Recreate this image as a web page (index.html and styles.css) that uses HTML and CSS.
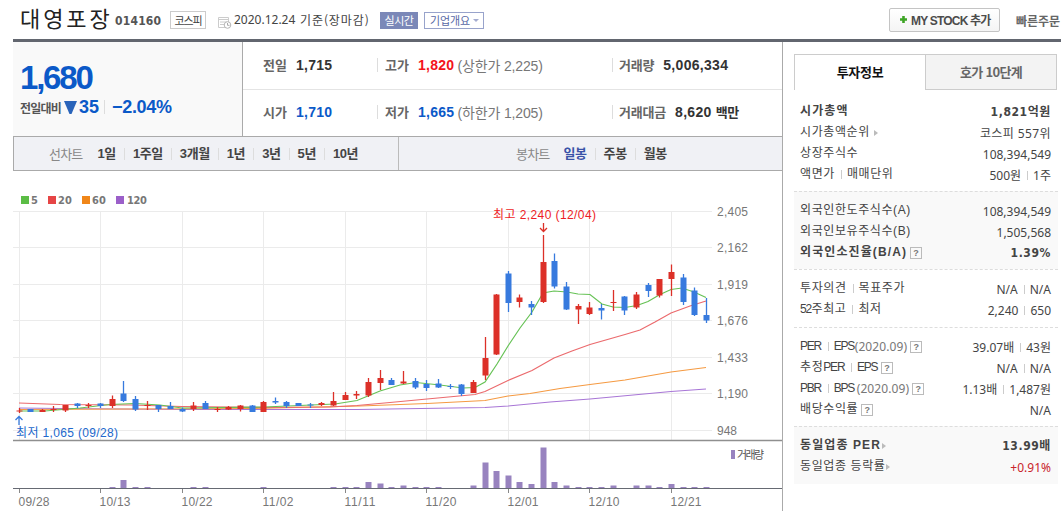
FILE: index.html
```html
<!doctype html>
<html lang="ko">
<head>
    <meta charset="UTF-8">
    <title>대영포장 014160</title>
    <link rel="stylesheet" href="styles.css">
</head>

<body>
<header class="top">
    <h1>대영포장</h1>
    <span class="code">014160</span>
    <span class="market">코스피</span>
    <svg class="cal" width="14" height="13" viewBox="0 0 14 13">
        <path d="M.5 1.5h10v10h-10zM.5 3.5h10M2 6h7M2 8.500h4" fill="none" stroke="#ccc"/>
        <circle cx="9.500" cy="9" r="3.300" fill="#fff" stroke="#b5b5b5"/>
        <path d="M9.500 7v2.300h2" fill="none" stroke="#aaa"/>
    </svg>
    <span class="date">2020.12.24</span>
    <span class="basis">기준(장마감)</span>
    <span class="live">실시간</span>
    <a class="outline">기업개요<i></i></a>
    <a class="mystock"><svg width="7" height="7"><path d="M3.500 0v7M0 3.500h7" stroke="#3ea526" stroke-width="2.600"/></svg>MY STOCK 추가</a>
    <a class="order">빠른주문</a>
</header>

<div class="wrap">
    <main>
        <section class="price">
            <div class="today">
                <strong>1,680</strong>
                <div class="change">
                    <span>전일대비</span>
                    <svg width="13" height="13"><path d="M0 0h13l-5.500 13h-2z" fill="#2a64ba"/></svg>
                    <b class="diff">35</b>
                    <b class="rate">−2.04%</b>
                </div>
            </div>
            <div class="detail">
                <div class="line">
                    <div><span>전일</span><b>1,715</b></div>
                    <div><span>고가</span><b class="up">1,820</b><em>(상한가 2,225)</em></div>
                    <div><span>거래량</span><b class="vol">5,006,334</b></div>
                </div>
                <div class="line">
                    <div><span>시가</span><b class="down">1,710</b></div>
                    <div><span>저가</span><b class="down">1,665</b><em>(하한가 1,205)</em></div>
                    <div><span>거래대금</span><b>8,620 <small>백만</small></b></div>
                </div>
            </div>
        </section>

        <nav class="period">
            <div class="line-chart">
                <span>선차트</span>
                <ul><li>1일</li><li>1주일</li><li>3개월</li><li>1년</li><li>3년</li><li>5년</li><li>10년</li></ul>
            </div>
            <div class="candle-chart">
                <span>봉차트</span>
                <ul><li class="on">일봉</li><li>주봉</li><li>월봉</li></ul>
            </div>
        </nav>

        <svg id="chart" width="769" height="340" viewBox="13 171 769 340">
            <g class="legend">
                <path d="M21 196h8v8h-8z" fill="#5bbd45"/><text x="31" y="204" textLength="7">5</text>
                <path d="M48 196h8v8h-8z" fill="#e64545"/><text x="58" y="204" textLength="14">20</text>
                <path d="M82 196h8v8h-8z" fill="#f08619"/><text x="92" y="204" textLength="14">60</text>
                <path d="M116 196h8v8h-8z" fill="#9b5fc9"/><text x="127" y="204" textLength="20">120</text>
            </g>
            <g id="grid"></g>
            <path d="M13 440.500h769" stroke="#8f8f8f" stroke-width="1.600"/>
            <g class="average">
                <path stroke="#a876d6" d="M19 408L60 408.500 182 409.500 357 409.500 485 407.500 508 406 550 402 590 399 671 391.500 706 389"/>
                <path stroke="#f59a42" d="M19 409.500L250 408.500 360 406 427 403.500 485 400.500 508 396 530 393.500 560 388.500 590 384.500 625 380 671 372 706 367.500"/>
                <path stroke="#eb6a6d" d="M19 403L60 404.500 130 405 182 406.500 264 407.500 330 407 357 405.500 390 402.500 427 399 475 394.500 485 391.500 508 380.500 532 370.500 554 358 572 351 590 344.500 625 334.500 640 330 655 322 671 313 690 306 706 301"/>
                <path stroke="#66c255" d="M19 411L45 411 80 408 110 404.500 135 403.500 160 405 182 408 264 407 335 404 357 400.500 380 391 400 385 416 382.500 440 385 463 388 475 387.500 485 382 497 364 508 346 520 328 532 312 543 293 554 291 567 292 578 294 590 294.500 602 304 613 307 625 307.500 637 305.500 648 301.500 660 294.500 671 289.500 682 288 694 292 706 297.500"/>
            </g>
            <g id="candles"></g>
            <g id="volume"></g>
            <path d="M13 488.500h769" stroke="#666a73"/>
            <g class="high">
                <path d="M543.500 223v8M540 228l3.500 3.500 3.500-3.500"/>
                <text x="493" y="219" textLength="103">최고 2,240 (12/04)</text>
            </g>
            <g class="low">
                <path d="M19 425v-8M15.500 420l3.500-3.500 3.500 3.500"/>
                <text x="16" y="437" textLength="102">최저 1,065 (09/28)</text>
            </g>
            <path d="M731 450h4v9h-4z" fill="#9883bf"/>
            <text class="volume-name" x="737" y="459" textLength="27">거래량</text>
        </svg>
    </main>

    <aside>
        <div class="tabs"><a class="on">투자정보</a><a>호가 10단계</a></div>
        <dl class="cap">
            <div class="strong"><dt>시가총액</dt><dd>1,821억원</dd></div>
            <div><dt>시가총액순위 <i class="go"></i></dt><dd class="rank">코스피 557위</dd></div>
            <div><dt>상장주식수</dt><dd>108,394,549</dd></div>
            <div><dt>액면가<s></s>매매단위</dt><dd>500원<s></s>1주</dd></div>
        </dl>
        <dl class="foreign gray">
            <div><dt>외국인한도주식수(A)</dt><dd>108,394,549</dd></div>
            <div><dt>외국인보유주식수(B)</dt><dd>1,505,568</dd></div>
            <div class="strong"><dt>외국인소진율(B/A)<q>?</q></dt><dd>1.39%</dd></div>
        </dl>
        <dl class="opinion">
            <div><dt>투자의견<s></s>목표주가</dt><dd>N/A<s></s>N/A</dd></div>
            <div><dt><span class="tight">52</span>주최고<s></s>최저</dt><dd>2,240<s></s>650</dd></div>
        </dl>
        <dl class="per">
            <div><dt><span class="tight">PER</span><s></s><span class="tight">EPS</span><small>(2020.09)</small><q>?</q></dt><dd>39.07배<s></s>43원</dd></div>
            <div><dt>추정<span class="tight">PER</span><s></s><span class="tight">EPS</span><q>?</q></dt><dd>N/A<s></s>N/A</dd></div>
            <div><dt><span class="tight">PBR</span><s></s><span class="tight">BPS</span><small class="gap">(2020.09)</small><q>?</q></dt><dd>1.13배<s></s>1,487원</dd></div>
            <div><dt>배당수익률<q>?</q></dt><dd>N/A</dd></div>
        </dl>
        <dl class="industry gray">
            <div class="strong"><dt>동일업종 PER<i class="go"></i></dt><dd>13.99배</dd></div>
            <div><dt>동일업종 등락률<i class="go"></i></dt><dd class="plus">+0.91%</dd></div>
        </dl>
    </aside>
</div>

<script src="chart.js"></script>
</body>
</html>
```
FILE: styles.css
```css
* {
    box-sizing: border-box;
}
body {
    margin: 0;
    width: 1061px;
    height: 511px;
    overflow: hidden;
    background: #fff;
    color: #444;
    font-family: "Noto Sans", "Noto Sans CJK KR", sans-serif;
    font-size: 12px;
    white-space: nowrap;
}
h1, dl, dd, ul {
    margin: 0;
    padding: 0;
}
ul {
    display: flex;
    list-style: none;
}
i, em {
    font-style: normal;
}

/* header */
.top {
    display: flex;
    align-items: center;
    height: 39px;
    padding-left: 20px;
}
.top > * {
    flex: none;
}
h1 {
    width: 95px;
    color: #222;
    font: 400 22px/30px "Noto Sans CJK KR", sans-serif;
    letter-spacing: 2.9px;
    margin-top: -5px;
}
.code {
    width: 55px;
    color: #555;
    font: bold 12px "DejaVu Sans Condensed", sans-serif;
    letter-spacing: .2px;
    margin-top: 2px;
}
.market {
    width: 36px;
    height: 18px;
    border: 1px solid #ccc;
    font: 400 11px/16px "Noto Sans CJK KR", sans-serif;
    letter-spacing: -1.2px;
    text-align: center;
}
.cal {
    margin: 5px 0 0 12px;
}
.date {
    width: 66px;
    margin-left: 2px;
    letter-spacing: 0;
}
.basis {
    width: 80px;
    font-family: "Noto Sans CJK KR", sans-serif;
    letter-spacing: .9px;
}
.live {
    width: 38px;
    height: 17px;
    margin-top: 1px;
    background: #7b88b8;
    color: #fff;
    font: 400 11px/16px "Noto Sans CJK KR", sans-serif;
    text-align: center;
    letter-spacing: -.5px;
}
.outline {
    display: flex;
    align-items: center;
    width: 60px;
    height: 17px;
    margin: 1px 0 0 6px;
    padding-left: 5px;
    border: 1px solid #98a3cb;
    color: #5968a5;
    font: 400 11px/15px "Noto Sans CJK KR", sans-serif;
    letter-spacing: -.1px;
}
.outline i {
    margin-left: 3px;
    border: 3px solid transparent;
    border-top-color: #a4acd0;
    border-bottom: 0;
}
.mystock {
    display: flex;
    align-items: center;
    gap: 4px;
    width: 111px;
    height: 24px;
    margin-left: 405px;
    padding-left: 10px;
    border: 1px solid #c4c4c4;
    border-radius: 2px;
    background: linear-gradient(#fff, #f4f4f4);
    color: #4c4c4c;
    font: bold 12px "Liberation Sans", "Noto Sans CJK KR", sans-serif;
    letter-spacing: -.8px;
}
.order {
    margin: 2px 0 0 16px;
    color: #666;
    font: bold 12px "Noto Sans CJK KR", sans-serif;
}

.wrap {
    display: flex;
    width: 1048px;
    height: 472px;
    margin-left: 13px;
    border-top: 3px solid #62666f;
}
main {
    width: 770px;
    border-right: 1px solid #aaa;
}

/* price */
.price {
    display: flex;
    height: 94px;
    font-family: "Liberation Sans", "Noto Sans CJK KR", sans-serif;
}
.today {
    width: 230px;
    padding: 18px 0 0 7px;
    border-right: 1px solid #aaa;
    background: #f9f9f9;
    color: #0b59c8;
}
.today strong {
    display: block;
    height: 36px;
    font-size: 33px;
    line-height: 36px;
    letter-spacing: -2.2px;
}
.change {
    display: flex;
    align-items: center;
    height: 22px;
}
.change span {
    width: 42px;
    color: #555;
    font: bold 12px "Noto Sans CJK KR", sans-serif;
    letter-spacing: -.8px;
}
.change b {
    font-size: 18px;
}
.change svg {
    margin-left: 2px;
}
.diff {
    width: 26px;
    margin-left: 2px;
    border-right: 1px solid #ddd;
    line-height: 14px;
}
.rate {
    margin-left: 7px;
    letter-spacing: -.3px;
}
.detail {
    width: 539px;
}
.line {
    display: flex;
    align-items: center;
    height: 47px;
    padding: 0 0 2px 20px;
    color: #666;
    font-size: 14px;
}
.line + .line {
    padding-bottom: 3px;
    border-top: 1px solid #e4e4e4;
}
.line > div {
    display: flex;
    align-items: center;
    height: 14px;
}
.line > div:nth-child(1) {
    width: 114px;
}
.line > div:nth-child(2) {
    width: 235px;
    padding-left: 7px;
    border-left: 1px solid #ddd;
}
.line > div:nth-child(3) {
    padding-left: 6px;
    border-left: 1px solid #ddd;
}
.line span {
    margin-right: 9px;
    font-size: 13px;
    font-weight: bold;
    letter-spacing: 0;
}
.line > div:nth-child(3) span {
    letter-spacing: -.2px;
}
.line b {
    color: #333;
    letter-spacing: .3px;
}
.line b small {
    font-size: 13px;
    letter-spacing: -.4px;
}
.line em {
    margin-left: 3px;
    color: #777;
    letter-spacing: -.15px;
}
.line .up {
    color: #f3131a;
}
.line .down {
    color: #0b59c8;
}

/* chart period */
.period {
    display: flex;
    height: 35px;
    border: 1px solid #aaa;
    border-width: 1px 0 1px 1px;
    background: #f0f1f5;
    color: #444;
    font: bold 13px "Liberation Sans", "Noto Sans CJK KR", sans-serif;
    letter-spacing: -.8px;
}
.period div {
    display: flex;
    align-items: center;
}
.period span {
    color: #888;
    font-weight: 400;
}
.line-chart {
    width: 385px;
    padding-left: 35px;
    border-right: 1px solid #bbb;
}
.line-chart ul {
    margin-left: 15px;
}
.candle-chart {
    padding-left: 117px;
}
.candle-chart ul {
    margin-left: 14px;
}
.period li {
    line-height: 12px;
    letter-spacing: -.4px;
}
.period li + li {
    margin-left: 8px;
    padding-left: 8px;
    border-left: 1px solid #ddd;
}
.period .on {
    color: #3953a8;
}

/* chart */
#chart {
    display: block;
    font-family: "Liberation Sans", "Noto Sans CJK KR", sans-serif;
    font-size: 12px;
}
.legend text {
    fill: #777;
    font: bold 11px "DejaVu Sans Condensed", sans-serif;
}
#grid path {
    stroke: #ebebeb;
}
#grid .tick {
    stroke: #888;
}
#grid text {
    fill: #777;
}
.average path {
    fill: none;
    stroke-width: 1.2;
}
.rise {
    fill: #dc3028;
    stroke: #dc3028;
    stroke-width: 1.3;
}
.fall {
    fill: #377ade;
    stroke: #377ade;
    stroke-width: 1.3;
}
#volume {
    fill: #9883bf;
}
.high path, .low path {
    fill: none;
    stroke: #dc3028;
    stroke-width: 1.3;
}
.low path {
    stroke: #377ade;
}
.high text {
    fill: #ee1c25;
}
.low text {
    fill: #2268cc;
}
.volume-name {
    fill: #555;
    font-size: 11px;
}

/* investment info */
aside {
    width: 264px;
    margin-left: 11px;
    padding-top: 12px;
}
.tabs {
    display: flex;
    height: 36px;
    width: 263px;
}
.tabs a {
    width: 131px;
    border: 1px solid #ccc;
    border-width: 1px 0 0 1px;
    color: #111;
    font: bold 13px/34px "Noto Sans CJK KR", sans-serif;
    letter-spacing: -.3px;
    text-align: center;
}
.tabs a + a {
    width: 132px;
    border-width: 1px;
    background: #f3f3f3;
    color: #666;
    letter-spacing: -.7px;
}
dl {
    padding: 8px 7px 0 6px;
    border-top: 1px dashed #ddd;
}
dl > div {
    display: flex;
    justify-content: space-between;
    height: 21px;
    line-height: 21px;
}
dt, dd {
    display: flex;
    align-items: center;
}
dt {
    font-family: "Liberation Sans", "Noto Sans CJK KR", sans-serif;
    letter-spacing: .6px;
}
dd {
    padding-top: 1px;
}
dt small {
    color: #777;
    font: 12px "Noto Sans", sans-serif;
    letter-spacing: .1px;
}
dt .gap {
    margin-left: 2px;
}
.strong {
    font-weight: bold;
}
.strong dt {
    letter-spacing: 1.1px;
}
.strong dd {
    font-family: "DejaVu Sans Condensed", "Noto Sans CJK KR", sans-serif;
    letter-spacing: .6px;
}
.rank {
    letter-spacing: .4px;
}
.cap {
    height: 101px;
    padding-top: 11px;
    border: 0;
}
.foreign {
    height: 78px;
}
.opinion {
    height: 58px;
}
.per {
    height: 99px;
}
.industry {
    height: 58px;
}
.gray {
    background: #f9f9f9;
}
.plus {
    color: #c9252b;
}
.tight {
    letter-spacing: -1.2px;
    margin-right: .6px;
}
s {
    width: 1px;
    height: 9px;
    margin: 0 5px 0 6px;
    background: #ccc;
}
.go {
    margin-left: 4px;
    border: 3px solid transparent;
    border-left: 4px solid #bbb;
    border-right: 0;
}
.industry .go {
    margin-left: 1px;
}
q {
    width: 12px;
    height: 12px;
    margin-left: 3px;
    border: 1px solid #bbb;
    color: #777;
    font: bold 9px/10px "Liberation Sans", sans-serif;
    letter-spacing: 0;
    text-align: center;
    quotes: none;
}
```
FILE: chart.js
```js
const NS = "http://www.w3.org/2000/svg";
const LEFT = 19, STEP = 11.65, BASE = 488;

// high, body top, body bottom, low, rising
const candles = [
    [408, 410.5, 411.5, 413, 1], [409, 409, 412, 412, 0], [409, 410, 412, 412, 1], [406, 409, 410, 412, 1],
    [405, 405, 410.5, 412, 1], [403, 403.5, 406, 408, 0], [403, 405, 406, 408, 1], [403, 403.5, 406, 408, 0],
    [395.5, 399, 406, 408, 1], [381, 393.5, 401, 402, 0], [396, 399, 409.5, 411, 0], [401, 405, 406, 410, 1],
    [405, 405, 409, 412, 0], [402, 406, 409, 409, 0], [407.5, 409, 411.5, 412, 0], [402, 405.5, 409, 411, 1],
    [401, 403, 409, 409, 0], [407, 409, 410, 412, 1], [406, 407, 409.5, 410, 1], [405, 405.5, 409, 411.5, 1],
    [405, 405.5, 412, 412, 0], [401, 402, 412, 412, 1], [397.5, 401, 402.5, 404, 0], [401, 402, 406, 408, 0],
    [403, 403, 406, 406, 0], [403, 404.5, 405.5, 408, 0], [402, 403, 405, 406, 1], [392, 401, 405.5, 406, 1],
    [392, 395, 400, 400, 1], [391, 394, 395.5, 399, 1], [378, 382, 395.5, 397, 1], [370, 378, 383, 390, 1],
    [378, 380, 385, 385, 0], [371, 381.5, 383.5, 384, 1], [378, 381, 387.5, 389, 0], [380, 384, 388, 391, 0],
    [379, 383.5, 387.5, 388, 0], [384, 386, 387, 389, 0], [384, 384.5, 394, 396, 0], [380, 382, 393, 393, 1],
    [337, 358, 375.5, 380, 1], [294, 294.5, 354.5, 355, 1], [271, 273.5, 303, 312, 0], [294.5, 297.5, 302, 307.5, 1],
    [301, 304, 307.5, 315, 0], [235, 262, 302, 303, 1], [253.5, 261, 286.5, 288.5, 0], [282, 286.5, 309.5, 310, 0],
    [304, 306, 309.5, 324, 1], [302, 307.5, 314, 315, 1], [304, 308, 310.5, 319.5, 0], [290, 302, 303, 311, 1],
    [296, 296.5, 310.5, 315, 0], [292, 294.5, 307.5, 309, 1], [283, 285, 291, 297, 0], [279, 279, 295.5, 297.5, 1],
    [264.5, 272, 279, 296, 1], [274, 277.5, 302, 305, 0], [287.5, 290.5, 315, 316, 0], [298, 315, 320.5, 323, 0],
];
const volumes = [
    0, 0, 0, 0, 0, 0, 0, 0, 1, 8, 1, 1, 0, 0, 0, 1, 1, 0, 0, 0,
    0, 1, 0, 0, 0, 0, 0, 1, 1, 1, 6, 4.5, 1, 2.5, 1, 1, 1, 0, 0, 2.5,
    25.5, 17, 12.5, 6, 4, 40.5, 6, 2.5, 1, 1, 1, 2.5, 0, 2.5, 2.5, 1, 4, 1, 1, 1,
];
const prices = [["2,405", 211.5], ["2,162", 247.5], ["1,919", 284.5], ["1,676", 320.5], ["1,433", 357.5], ["1,190", 393.5], ["948", 430.5]];
const days = ["09/28", "10/13", "10/22", "11/02", "11/11", "11/20", "12/01", "12/10", "12/21"];

function add(parent, name, attrs, text) {
    const el = document.createElementNS(NS, name);
    for (const key in attrs) el.setAttribute(key, attrs[key]);
    if (text) el.textContent = text;
    document.getElementById(parent).appendChild(el);
}

prices.forEach(([label, y]) => {
    add("grid", "path", {d: `M13 ${y}H712`});
    add("grid", "text", {x: 717, y: y + 4.5, textLength: label.length > 3 ? 31 : 20}, label);
});
days.forEach((label, i) => {
    const x = Math.floor(LEFT + i * STEP * 7) + .5;
    add("grid", "path", {d: `M${x} 211V440`});
    add("grid", "path", {d: `M${x} 489V493`, class: "tick"});
    add("grid", "text", {x: x - 1, y: 505.5, textLength: 31}, label);
});
candles.forEach(([high, top, bottom, low, rising], i) => {
    const x = Math.floor(LEFT + i * STEP) + .5;
    const cls = rising ? "rise" : "fall";
    add("candles", "path", {d: `M${x} ${high}V${low}`, class: cls});
    add("candles", "rect", {x: x - 3, y: top, width: 6, height: bottom - top, class: cls, style: "stroke: none"});
});
volumes.forEach((h, i) => {
    if (h) add("volume", "rect", {x: Math.floor(LEFT + i * STEP) - 2.5, y: BASE - h, width: 6, height: h});
});
```
